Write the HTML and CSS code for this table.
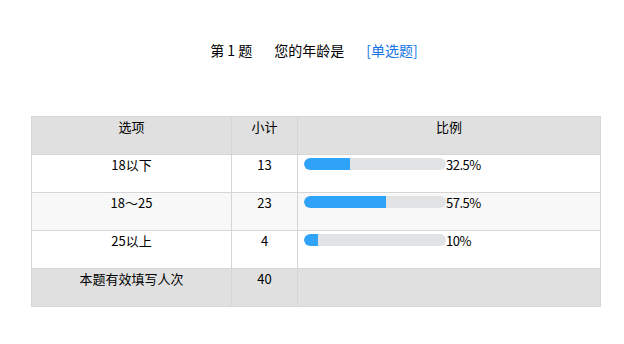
FILE: index.html
```html
<!DOCTYPE html>
<html>
<head>
<meta charset="utf-8">
<link rel="stylesheet" href="styles.css">
</head>
<body>
<div class="page">
  <div class="title">
    <span class="num">第 1 题</span>
    <span class="q">您的年龄是</span>
    <span class="type">[单选题]</span>
  </div>
  <table class="stats">
    <colgroup>
      <col class="c1"><col class="c2"><col class="c3">
    </colgroup>
    <tr class="head"><td>选项</td><td>小计</td><td>比例</td></tr>
    <tr><td>18以下</td><td>13</td><td class="ratio"><div class="bar"><span class="fill" style="width:32.5%"></span></div><span class="pct">32.5%</span></td></tr>
    <tr class="alt"><td>18～25</td><td>23</td><td class="ratio"><div class="bar"><span class="fill" style="width:57.5%"></span></div><span class="pct">57.5%</span></td></tr>
    <tr><td>25以上</td><td>4</td><td class="ratio"><div class="bar"><span class="fill" style="width:10%"></span></div><span class="pct">10%</span></td></tr>
    <tr class="foot"><td>本题有效填写人次</td><td>40</td><td></td></tr>
  </table>
</div>
</body>
</html>
```

FILE: styles.css
```css
html, body {
  margin: 0;
  padding: 0;
  background: #ffffff;
}
body {
  font-family: "Noto Sans CJK SC", "DejaVu Sans", sans-serif;
  color: #000;
}
.page {
  padding-top: 39px;
}
.title {
  display: flex;
  justify-content: center;
  gap: 22px;
  font-size: 14px;
  line-height: 22px;
  padding-left: 4px;
}
.title .type {
  color: #1473e6;
}
.stats {
  margin-top: 55px;
  margin-left: 31px;
  width: 569px;
  border-collapse: collapse;
  table-layout: fixed;
  font-size: 13px;
}
.c1 { width: 200px; }
.c2 { width: 66px; }
.c3 { width: 303px; }
.stats td {
  border: 1px solid #d6d6d6;
  height: 38px;
  padding: 1px 0 0;
  vertical-align: top;
  text-align: center;
  line-height: 18px;
  box-sizing: border-box;
}
.stats tr.head td,
.stats tr.foot td {
  background: #e0e0e0;
}
.stats tr.alt td {
  background: #f8f8f8;
}
.stats td.ratio {
  text-align: left;
  padding-left: 6px;
}
.ratio .bar {
  display: inline-block;
  vertical-align: top;
  margin-top: 2px;
  width: 142px;
  height: 12px;
  border-radius: 6px;
  background: #e2e3e5;
  overflow: hidden;
}
.ratio .fill {
  display: block;
  height: 100%;
  background: #2ea3f8;
  border-radius: 6px 0 0 6px;
}
.ratio .pct {
  display: inline-block;
  vertical-align: top;
  letter-spacing: -0.5px;
}
```
